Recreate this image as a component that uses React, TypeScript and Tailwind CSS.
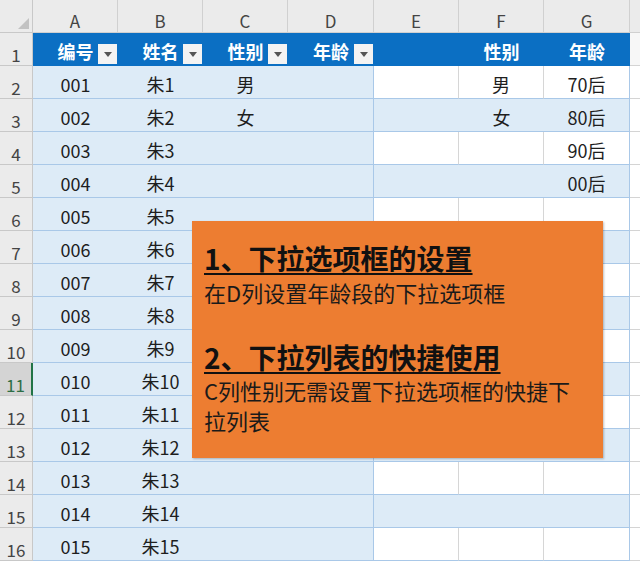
import React from "react";

const colW = ["w-[85px]", "w-[85px]", "w-[85px]", "w-[86px]", "w-[85px]", "w-[85px]", "w-[86px]"];
const letters = ["A", "B", "C", "D", "E", "F", "G"];

const cMap: Record<number, string> = { 2: "男", 3: "女" };
const gMap: Record<number, string> = { 2: "70后", 3: "80后", 4: "90后", 5: "00后" };

function FilterBtn() {
  return (
    <div className="absolute right-[1px] bottom-[2px] w-[19px] h-[20px] bg-[#f3f3f3] flex items-center justify-center">
      <svg width="8" height="5" viewBox="0 0 8 5">
        <path d="M0 0 L8 0 L4 5 Z" fill="#555" />
      </svg>
    </div>
  );
}

function RowHeader({ r }: { r: number }) {
  const sel = r === 11;
  return (
    <div
      className={
        "w-[33px] h-[33px] shrink-0 box-border border-b border-[#c8c8c8] text-center text-[17px] leading-[24px] pt-[10px] " +
        (sel
          ? "bg-[#d4d4d4] text-[#2d6e45] border-r-2 border-r-[#217346]"
          : "bg-[#ebebeb] text-[#444] border-r border-r-[#c8c8c8]")
      }
    >
      {r}
    </div>
  );
}

function Cell({
  cls,
  children,
}: {
  cls: string;
  children?: React.ReactNode;
}) {
  return (
    <div className={"h-[33px] shrink-0 box-border flex justify-center pt-[6px] leading-[24px] text-[18px] text-[#1e1e1e] " + cls}>
      {children}
    </div>
  );
}

function HeaderRow() {
  return (
    <div className="flex h-[33px]">
      <RowHeader r={1} />
      {["编号", "姓名", "性别", "年龄"].map((t, i) => (
        <div
          key={t + i}
          className={"relative h-[33px] shrink-0 bg-[#0b6fc3] flex justify-center pt-[6px] leading-[24px] text-[18px] font-bold text-white " + colW[i]}
        >
          {t}
          <FilterBtn />
        </div>
      ))}
      {["", "性别", "年龄"].map((t, i) => (
        <div
          key={"h2" + i}
          className={"h-[33px] shrink-0 bg-[#0b6fc3] flex justify-center pt-[6px] leading-[24px] text-[18px] font-bold text-white " + colW[i + 4]}
        >
          {t}
        </div>
      ))}
      <div className="w-[10px] h-[33px] shrink-0 box-border bg-[#f7f7f7] border-b border-[#d4d4d4]" />
    </div>
  );
}

function DataRow({ r }: { r: number }) {
  const band = r % 2 === 1;
  const t1 = "bg-[#ddebf7] border-b border-b-[#a9c8e8]";
  const t2 = band
    ? "bg-[#ddebf7] border-b border-b-[#a9c8e8]"
    : "bg-white border-b border-b-[#a9c8e8]";
  const t2v = band ? "" : " border-r border-r-[#d6d6d6]";
  return (
    <div className="flex h-[33px]">
      <RowHeader r={r} />
      <Cell cls={colW[0] + " " + t1}>{String(r - 1).padStart(3, "0")}</Cell>
      <Cell cls={colW[1] + " " + t1}>{"朱" + (r - 1)}</Cell>
      <Cell cls={colW[2] + " " + t1}>{cMap[r] ?? ""}</Cell>
      <Cell cls={colW[3] + " " + t1 + " border-r border-r-[#a9c8e8]"}></Cell>
      <Cell cls={colW[4] + " " + t2 + t2v}></Cell>
      <Cell cls={colW[5] + " " + t2 + t2v}>{cMap[r] ?? ""}</Cell>
      <Cell cls={colW[6] + " " + t2 + " border-r border-r-[#a9c8e8]"}>{gMap[r] ?? ""}</Cell>
      <div className="w-[10px] h-[33px] shrink-0 box-border bg-white border-b border-[#d4d4d4]" />
    </div>
  );
}

export default function App() {
  const rows = Array.from({ length: 15 }, (_, i) => i + 2);
  return (
    <div className="relative w-[640px] h-[562px] overflow-hidden bg-white font-['Noto_Sans_CJK_SC','Noto_Sans',sans-serif]">
      {/* column header strip */}
      <div className="flex h-[33px] bg-[#ebebeb]">
        <div className="relative w-[33px] h-[33px] shrink-0 box-border border-r border-b border-[#c8c8c8]">
          <svg className="absolute left-0 top-0" width="33" height="33" viewBox="0 0 33 33">
            <path d="M18 29 L29 18 L29 29 Z" fill="#c2c2c2" />
          </svg>
        </div>
        {letters.map((l, i) => (
          <div
            key={l}
            className={"h-[33px] shrink-0 box-border border-r border-b border-[#d0d0d0] text-center text-[17px] leading-[24px] pt-[9px] text-[#444] " + colW[i]}
          >
            {l}
          </div>
        ))}
        <div className="w-[10px] h-[33px] shrink-0 box-border border-b border-[#d0d0d0]" />
      </div>
      <HeaderRow />
      {rows.map((r) => (
        <DataRow key={r} r={r} />
      ))}

      {/* orange note box */}
      <div className="absolute left-[192px] top-[221px] w-[411px] h-[237px] bg-[#ed7d31] shadow-[1px_1px_2px_rgba(0,0,0,0.25)] pl-[12px] pt-[20px] text-[#111]">
        <div className="text-[28px] leading-[34px] font-bold underline decoration-2 underline-offset-[3px]">
          1、下拉选项框的设置
        </div>
        <div className="mt-[2px] text-[22px] leading-[30px] text-[#1a1a1a]">在D列设置年龄段的下拉选项框</div>
        <div className="mt-[33px] text-[28px] leading-[34px] font-bold underline decoration-2 underline-offset-[3px]">
          2、下拉列表的快捷使用
        </div>
        <div className="mt-[1px] text-[22px] leading-[30px] text-[#1a1a1a]">C列性别无需设置下拉选项框的快捷下</div>
        <div className="text-[22px] leading-[30px] text-[#1a1a1a]">拉列表</div>
      </div>
    </div>
  );
}
